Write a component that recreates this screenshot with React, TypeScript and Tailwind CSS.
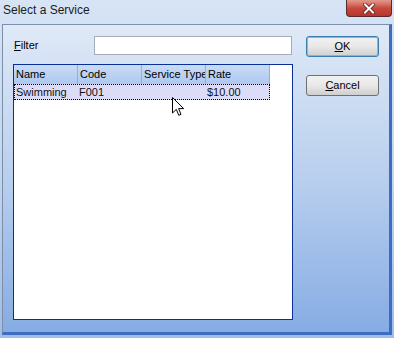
import React from 'react';

const columns = ['Name', 'Code', 'Service Type', 'Rate'];

function Cursor() {
  return (
    <svg width="13" height="20" viewBox="0 0 13 20" className="absolute left-[172px] top-[97px]">
      <path d="M0.5 0.5 L0.5 16 L4.3 12.4 L6.8 18.3 L9 17.4 L6.6 11.6 L11.7 11.6 Z" fill="#ffffff" stroke="#000000" strokeWidth="1" strokeLinejoin="miter" />
    </svg>
  );
}

export default function App() {
  return (
    <div
      className="relative w-[394px] h-[338px] overflow-hidden bg-gradient-to-b from-[#d6e4f5] via-[#c2d6ef] to-[#9fbde8]"
      style={{ fontFamily: '"Liberation Sans", Arial, sans-serif' }}
    >
      {/* barre de titre */}
      <div className="h-[24px] flex items-start">
        <div className="pl-[3px] pt-[2px] text-[12px] text-[#1b1b1b] leading-[16px]">Select a Service</div>
        <div className="ml-auto mr-[2px] w-[46px] h-[17px] rounded-b-[4px] border border-t-0 border-[#5a2a2a] bg-gradient-to-b from-[#e39a8f] via-[#c9483e] to-[#b7342c] flex items-center justify-center">
          <svg width="12" height="11" viewBox="0 0 12 11">
            <path d="M2 1.5 L10 9.5 M10 1.5 L2 9.5" stroke="#5a1c18" strokeWidth="3.6" strokeLinecap="square" />
            <path d="M2 1.5 L10 9.5 M10 1.5 L2 9.5" stroke="#ffffff" strokeWidth="2" strokeLinecap="square" />
          </svg>
        </div>
      </div>

      {/* zone client */}
      <div className="ml-[2px] w-[390px] h-[311px] border-l border-t border-[#7d8ea8] border-r-[3px] border-r-[#3d6dc2] border-b-[3px] border-b-[#3d6dc2] bg-gradient-to-b from-[#dfe9f7] via-[#b9cfee] to-[#86ace4] flex pt-[11px] pl-[10px]">
        <div className="w-[280px] flex flex-col">
          <div className="h-[19px] flex items-center">
            <div className="w-[81px] pl-[1px] text-[11px] text-black">
              <span className="underline underline-offset-1">F</span>ilter
            </div>
            <div className="w-[198px] h-[19px] bg-white border border-[#a5acb5] border-t-[#abadb3]" />
          </div>

          <div className="mt-[9px] w-[280px] h-[256px] bg-white border border-[#0a2f97] flex flex-col">
            <div className="flex h-[19px]">
              {columns.map((c) => (
                <div
                  key={c}
                  className="w-[64px] h-[19px] overflow-hidden whitespace-nowrap pl-[2px] text-[11px] leading-[19px] text-black bg-gradient-to-b from-[#c9dcf6] to-[#adc8ef] border-r border-[#8fafe0]"
                >
                  {c}
                </div>
              ))}
            </div>
            <div className="flex h-[16px] w-[256px] bg-[#dcdcf8] border border-dotted border-black">
              <div className="w-[63px] pl-[1px] text-[11px] leading-[14px] text-[#111]">Swimming</div>
              <div className="w-[64px] pl-[1px] text-[11px] leading-[14px] text-[#111]">F001</div>
              <div className="w-[64px]" />
              <div className="w-[63px] pl-[1px] text-[11px] leading-[14px] text-[#111]">$10.00</div>
            </div>
          </div>
        </div>

        <div className="ml-[13px] flex flex-col">
          <button className="w-[73px] h-[21px] rounded-[3px] border border-[#3c7fb1] shadow-[inset_0_0_0_1px_#48d0f8] bg-gradient-to-b from-[#f2f2f2] via-[#e8e8e8] to-[#cfcfcf] text-[11px] text-black">
            <span className="underline underline-offset-1">O</span>K
          </button>
          <button className="mt-[18px] w-[73px] h-[21px] rounded-[3px] border border-[#707070] bg-gradient-to-b from-[#f2f2f2] via-[#e8e8e8] to-[#cfcfcf] text-[11px] text-black">
            <span className="underline underline-offset-1">C</span>ancel
          </button>
        </div>
      </div>

      <Cursor />
    </div>
  );
}
